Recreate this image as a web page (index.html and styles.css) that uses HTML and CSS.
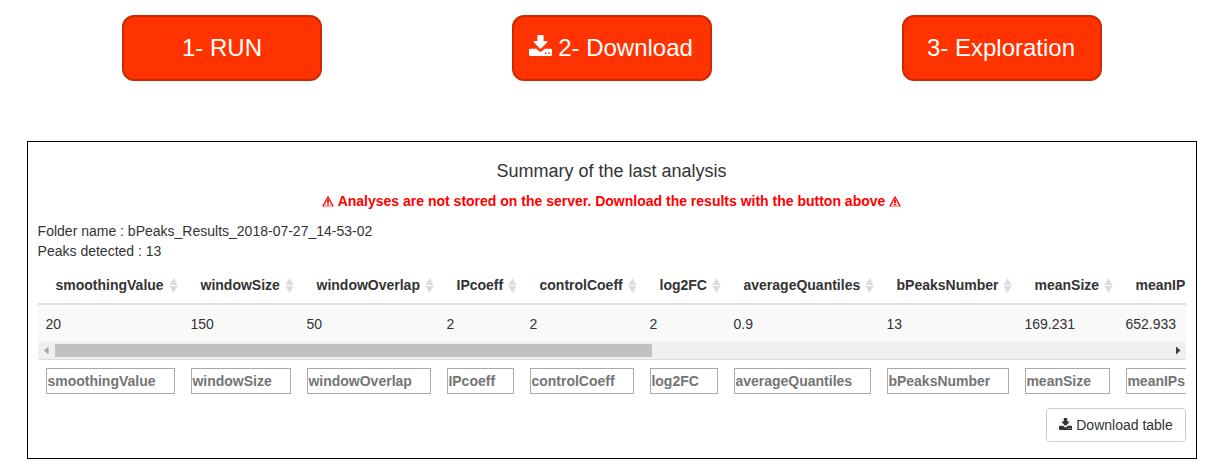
FILE: index.html
```
<!DOCTYPE html>
<html lang="en">
<head>
<meta charset="utf-8">
<title>bPeaks analysis</title>
<link rel="stylesheet" href="styles.css">
</head>
<body>
<svg class="defs" aria-hidden="true">
  <symbol id="download" viewBox="0 0 23 21">
    <path fill="currentColor" fill-rule="evenodd" d="M9 0h5q.6 0 .6.6V6h3q1.4.2.6 1.3l-6 6.2q-.7.6-1.4 0l-6-6.2Q4 6.200 5.400 6h3V.6Q8.400 0 9 0zM1.300 13.800h6.200l2.200 2.100q1.800 1.500 3.600 0l2.200-2.100h6.200q1.300 0 1.300 1.300v4.600q0 1.300-1.300 1.300H1.300Q0 21 0 19.700v-4.600q0-1.300 1.300-1.300zM15.900 17.500v1.500h1.500v-1.500zM19.300 17.500v1.500h1.500v-1.500z"/>
  </symbol>
  <symbol id="warning" viewBox="0 0 12 11">
    <path d="M1.800 7.500h8.400L12 11H0z" fill="#ff0000" fill-opacity=".2"/>
    <path d="M.9 10.200L6 1l5.100 9.200" fill="none" stroke="#ff0000" stroke-width="1.300"/>
    <path d="M.6 10.500h10.800" fill="none" stroke="#ff0000" stroke-opacity=".25"/>
    <path d="M5.100 3.500h1.800v3.500H5.100zM5.100 7.700h1.800V9.200H5.100z" fill="#ff0000"/>
  </symbol>
  <symbol id="sort" viewBox="0 0 9 15">
    <path d="M4.500 0L8.600 7H.4zM.4 8h8.200L4.500 15z" fill="#dcdcdc"/>
  </symbol>
</svg>
<nav class="steps">
  <button class="step">1- RUN</button>
  <button class="step"><svg class="step-icon"><use href="#download"/></svg>2- Download</button>
  <button class="step explore">3- Exploration</button>
</nav>
<main class="panel">
  <h4 class="title">Summary of the last analysis</h4>
  <p class="warning"><svg class="warn-icon"><use href="#warning"/></svg><span>Analyses are not stored on the server. Download the results with the button above</span><svg class="warn-icon"><use href="#warning"/></svg></p>
  <div class="info">Folder name : bPeaks_Results_2018-07-27_14-53-02</div>
  <div class="info">Peaks detected : 13</div>
  <div class="table">
    <div class="row head">
      <div class="th">smoothingValue<svg class="sort"><use href="#sort"/></svg></div>
      <div class="th">windowSize<svg class="sort"><use href="#sort"/></svg></div>
      <div class="th">windowOverlap<svg class="sort"><use href="#sort"/></svg></div>
      <div class="th">IPcoeff<svg class="sort"><use href="#sort"/></svg></div>
      <div class="th">controlCoeff<svg class="sort"><use href="#sort"/></svg></div>
      <div class="th">log2FC<svg class="sort"><use href="#sort"/></svg></div>
      <div class="th">averageQuantiles<svg class="sort"><use href="#sort"/></svg></div>
      <div class="th">bPeaksNumber<svg class="sort"><use href="#sort"/></svg></div>
      <div class="th">meanSize<svg class="sort"><use href="#sort"/></svg></div>
      <div class="th">meanIP</div>
    </div>
    <div class="row body">
      <div class="td">20</div><div class="td">150</div><div class="td">50</div><div class="td">2</div><div class="td">2</div><div class="td">2</div><div class="td">0.9</div><div class="td">13</div><div class="td">169.231</div><div class="td">652.933</div>
    </div>
    <div class="scrollbar">
      <svg class="arrow" viewBox="0 0 17 17"><path d="M10.500 4.800v7.400L6 8.500z" fill="#a3a3a3"/></svg>
      <div class="thumb"></div>
      <svg class="arrow" viewBox="0 0 17 17"><path d="M7 4.500v8l4.500-4z" fill="#404040"/></svg>
    </div>
    <div class="row foot">
      <div class="tf"><input class="filter" placeholder="smoothingValue"></div>
      <div class="tf"><input class="filter" placeholder="windowSize"></div>
      <div class="tf"><input class="filter" placeholder="windowOverlap"></div>
      <div class="tf"><input class="filter" placeholder="IPcoeff"></div>
      <div class="tf"><input class="filter" placeholder="controlCoeff"></div>
      <div class="tf"><input class="filter" placeholder="log2FC"></div>
      <div class="tf"><input class="filter" placeholder="averageQuantiles"></div>
      <div class="tf"><input class="filter" placeholder="bPeaksNumber"></div>
      <div class="tf"><input class="filter" placeholder="meanSize"></div>
      <div class="tf"><input class="filter" placeholder="meanIPs"></div>
    </div>
  </div>
  <div class="actions">
    <button class="export"><svg class="export-icon"><use href="#download"/></svg>Download table</button>
  </div>
</main>
</body>
</html>
```
FILE: styles.css
```
* { box-sizing: border-box; }
body {
  margin: 0;
  padding: 15px 24px 0 27px;
  background: #fff;
  color: #333;
  font: 14px/20px "Liberation Sans", Arial, sans-serif;
  overflow: hidden;
}
.defs { display: none; }
.steps {
  display: grid;
  grid-template-columns: repeat(3, 1fr);
  justify-items: center;
  margin-bottom: 60px;
}
.step {
  display: flex;
  align-items: center;
  justify-content: center;
  gap: 6px;
  width: 200px;
  height: 66px;
  padding: 0;
  border: 2px solid #cc2900;
  border-radius: 12px;
  background: #ff3300;
  color: #fff;
  font: 24px/34px "Liberation Sans", Arial, sans-serif;
}
.step:nth-child(n+2) { padding-right: 2px; }
.step-icon { width: 23px; height: 21px; margin-top: -5px; }
.panel {
  height: 318px;
  padding: 19px 10px 0;
  border: 1px solid #000;
}
.title {
  margin: 0 0 10px;
  padding-right: 1px;
  font-size: 18px;
  font-weight: 400;
  line-height: 20px;
  text-align: center;
}
.warning {
  display: flex;
  justify-content: center;
  align-items: center;
  gap: 4px;
  margin: 0 0 10px;
  padding-right: 1px;
  color: #f00;
  font-weight: 700;
}
.warn-icon { width: 12px; height: 11px; }
.info { height: 20px; margin-left: -0.4px; }
.table { margin-top: 4px; overflow: hidden; }
.row {
  display: grid;
  grid-template-columns: 145px 116px 140px 83px 120px 84px 153px 138px 101px 133px;
}
.head { border-bottom: 2px solid #ddd; width: 1213px; }
.th {
  display: flex;
  justify-content: space-between;
  align-items: center;
  height: 38px;
  padding: 2px 5px 0 17.5px;
  font-weight: 700;
}
.sort { width: 9px; height: 15px; }
.body { width: 1213px; height: 37px; background: #f9f9f9; }
.td { padding: 9px 8px 8px 7.5px; }
.scrollbar {
  display: flex;
  align-items: center;
  height: 17px;
  background: #f0f0f0;
}
.arrow { width: 17px; height: 17px; flex: none; }
.arrow:last-child { margin-left: auto; }
.thumb { width: 597px; height: 13px; background: #c1c1c1; }
.foot { width: 1213px; border-top: 1px solid #ddd; }
.tf { padding: 8px; }
.filter {
  display: block;
  width: 100%;
  height: 26px;
  padding: 1px 1px 1px 0.4px;
  border: 1px solid #a9a9a9;
  border-radius: 0;
  background: #fff;
  font: 700 14px/20px "Liberation Sans", Arial, sans-serif;
}
.filter::placeholder { color: #757575; opacity: 1; }
.actions { display: flex; justify-content: flex-end; margin-top: 6px; }
.export {
  display: flex;
  align-items: center;
  justify-content: center;
  gap: 4px;
  width: 140px;
  height: 34px;
  padding: 0;
  border: 1px solid #ccc;
  border-radius: 4px;
  background: #fff;
  color: #333;
  font: 14px/20px "Liberation Sans", Arial, sans-serif;
}
.export-icon { width: 13px; height: 12px; margin-top: -2px; }
```
